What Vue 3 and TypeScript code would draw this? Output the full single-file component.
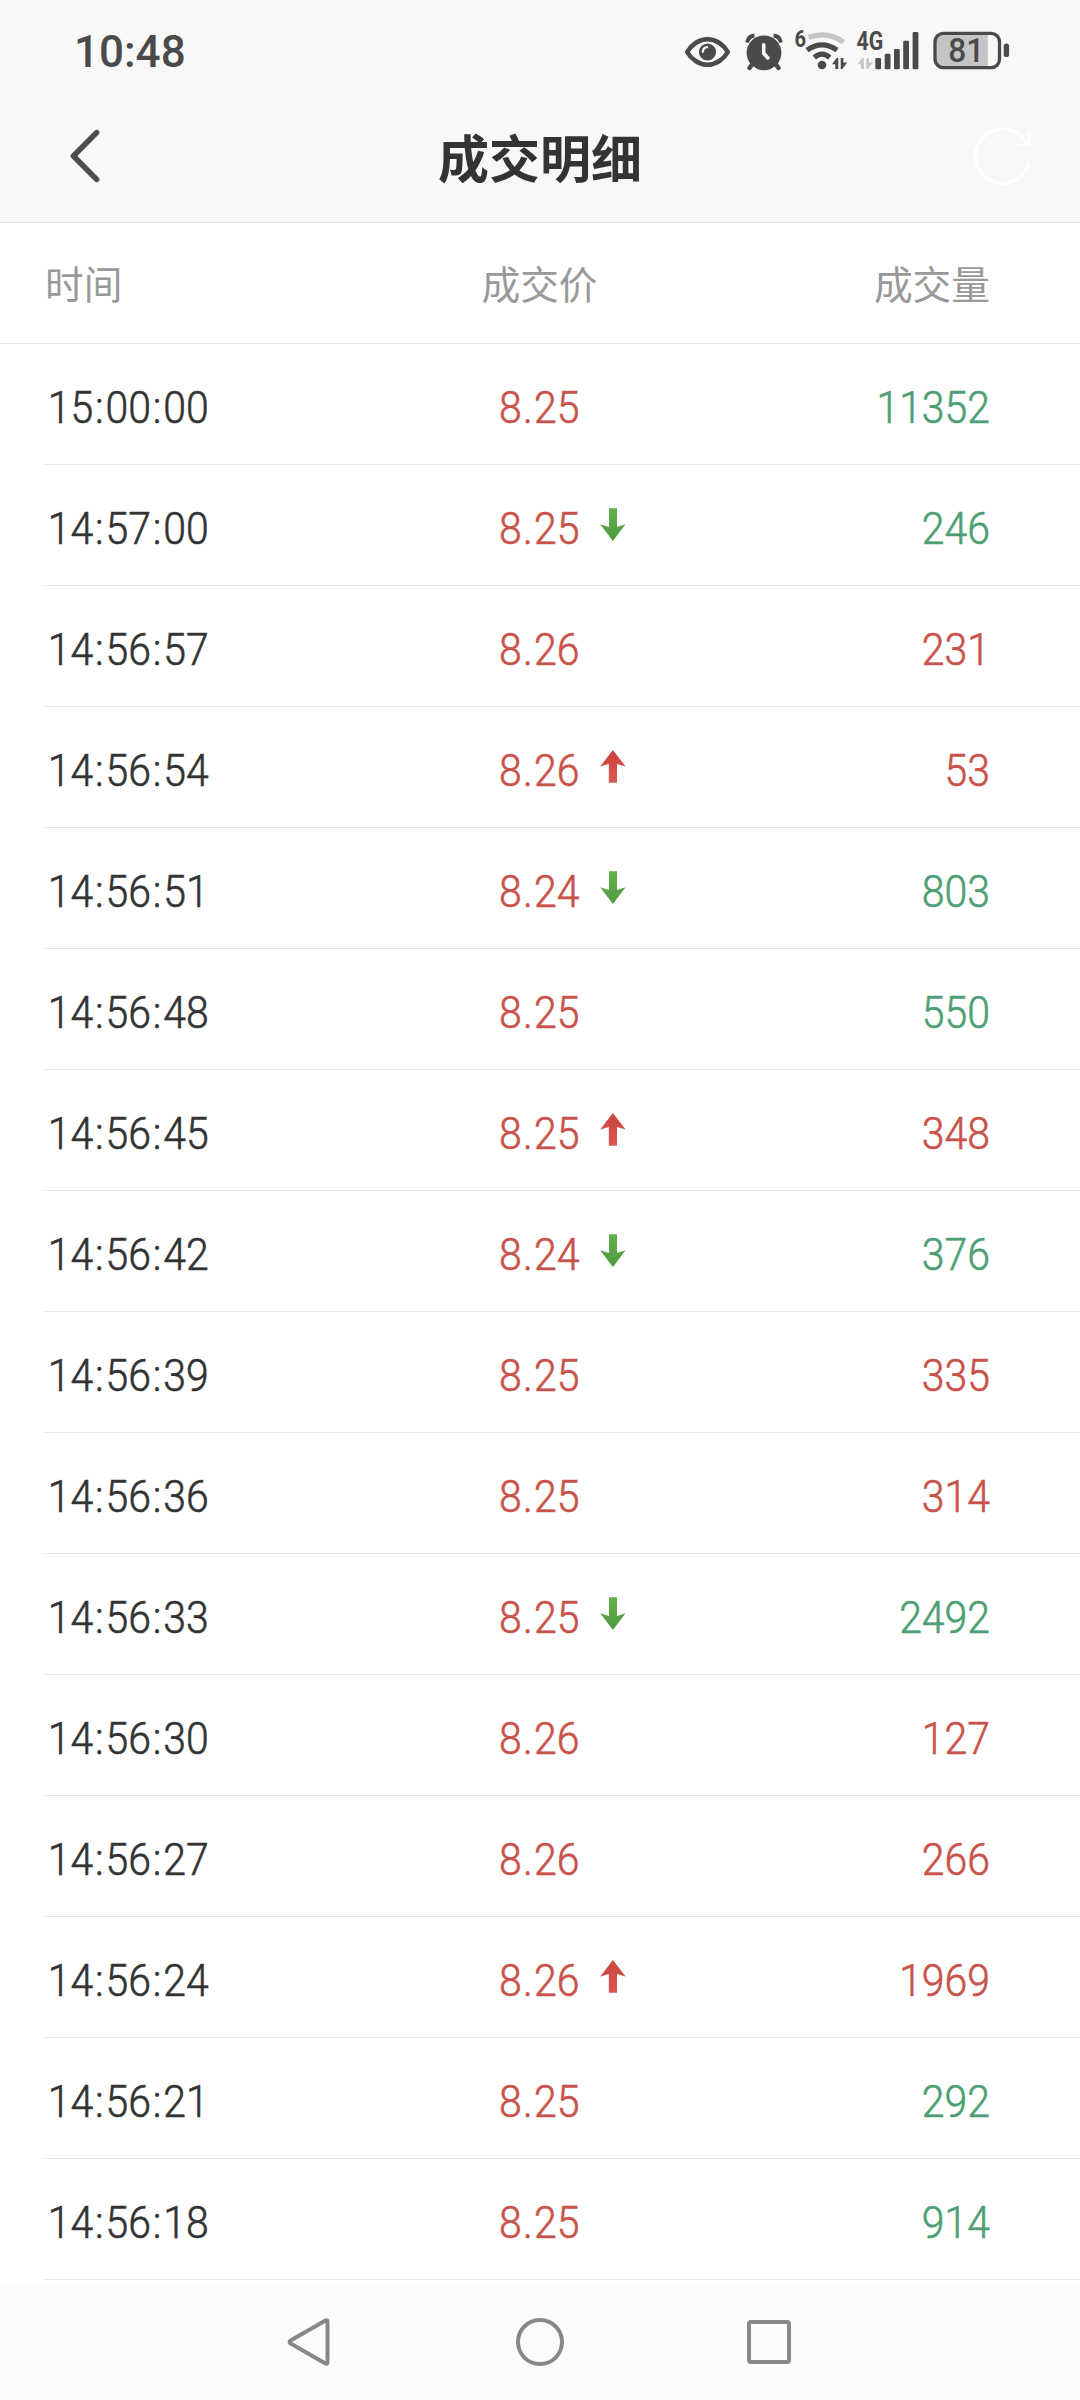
<script setup lang="ts">
type Tone = 'up' | 'down'

interface Trade {
  time: string
  price: string
  arrow?: Tone
  volume: string
  side: Tone
}

const trades: Trade[] = [
  { time: '15:00:00', price: '8.25', volume: '11352', side: 'down' },
  { time: '14:57:00', price: '8.25', arrow: 'down', volume: '246', side: 'down' },
  { time: '14:56:57', price: '8.26', volume: '231', side: 'up' },
  { time: '14:56:54', price: '8.26', arrow: 'up', volume: '53', side: 'up' },
  { time: '14:56:51', price: '8.24', arrow: 'down', volume: '803', side: 'down' },
  { time: '14:56:48', price: '8.25', volume: '550', side: 'down' },
  { time: '14:56:45', price: '8.25', arrow: 'up', volume: '348', side: 'up' },
  { time: '14:56:42', price: '8.24', arrow: 'down', volume: '376', side: 'down' },
  { time: '14:56:39', price: '8.25', volume: '335', side: 'up' },
  { time: '14:56:36', price: '8.25', volume: '314', side: 'up' },
  { time: '14:56:33', price: '8.25', arrow: 'down', volume: '2492', side: 'down' },
  { time: '14:56:30', price: '8.26', volume: '127', side: 'up' },
  { time: '14:56:27', price: '8.26', volume: '266', side: 'up' },
  { time: '14:56:24', price: '8.26', arrow: 'up', volume: '1969', side: 'up' },
  { time: '14:56:21', price: '8.25', volume: '292', side: 'down' },
  { time: '14:56:18', price: '8.25', volume: '914', side: 'down' },
]

// Separators get a wider cell than the font gives them.
const parts = (s: string): string[] => s.split(/([:.])/)
const isSep = (s: string): boolean => s === ':' || s === '.'
</script>

<template>
  <div class="screen">
    <header class="top">
      <div class="status">
        <span class="clock">10:48</span>
        <div class="indicators">
          <svg class="eye" width="46" height="40" viewBox="684 32 46 40">
            <path d="M687.2 52C691 45 699 39.2 707.5 39.2S724 45 727.8 52C724 59 716 64.8 707.5 64.8S691 59 687.2 52Z" fill="none" stroke="#4a4a4a" stroke-width="4.6" stroke-linejoin="round" />
            <circle cx="707.5" cy="52" r="8.6" fill="#4a4a4a" />
            <path d="M702.8 51.8A5 5 0 0 1 707 47.2" fill="none" stroke="#f8f8f8" stroke-width="2.2" stroke-linecap="round" />
          </svg>
          <svg class="alarm" width="38" height="40" viewBox="744.5 32 38 40">
            <circle cx="763.5" cy="52.8" r="17.4" fill="#4a4a4a" />
            <path d="M746.6 42.5Q748 36 754 35.6M780.4 42.5Q779 36 773 35.6" fill="none" stroke="#4a4a4a" stroke-width="4" />
            <path d="M751.5 64.5L749 68M775.5 64.5L778 68" stroke="#4a4a4a" stroke-width="4.4" stroke-linecap="round" />
            <path d="M763.2 44.8V53.2L767.4 58" fill="none" stroke="#f8f8f8" stroke-width="3.6" stroke-linecap="round" stroke-linejoin="round" />
          </svg>
          <svg class="wifi" width="54" height="60" viewBox="794 20 54 60">
            <path d="M808.5 37.2Q828 30.5 843.6 42.2" fill="none" stroke="#c5c5c5" stroke-width="5.2" />
            <path d="M807 50.2Q822 39.6 837 50.2M814.3 57.4Q822 50.9 829.7 57.4" fill="none" stroke="#4a4a4a" stroke-width="5.2" />
            <circle cx="822" cy="65" r="4.3" fill="#4a4a4a" />
            <path d="M832 64.2L836.6 58H838.3V69H835.3V64.2ZM840.7 58H843.4V62.6H847.2L842.4 69H840.7Z" fill="#4a4a4a" />
            <text x="794.6" y="46.6" font-size="23" font-weight="700" textLength="11.6" lengthAdjust="spacingAndGlyphs" fill="#4a4a4a">6</text>
          </svg>
          <svg class="signal" width="64" height="60" viewBox="856 20 64 60">
            <text x="856.6" y="49.8" font-size="25" font-weight="700" textLength="26.8" lengthAdjust="spacingAndGlyphs" fill="#4a4a4a">4G</text>
            <path d="M857.6 64.2L862.2 58H863.9V69H860.9V64.2ZM866.3 58H869V62.6H872.8L868 69H866.3Z" fill="#c5c5c5" />
            <g fill="#4a4a4a">
              <rect x="875.3" y="58" width="5.8" height="11.3" rx="1.4" />
              <rect x="884.7" y="53.7" width="5.8" height="15.6" rx="1.4" />
              <rect x="894" y="49" width="5.8" height="20.3" rx="1.4" />
              <rect x="903.2" y="40.8" width="5.8" height="28.5" rx="1.4" />
              <rect x="912.6" y="32" width="5.8" height="37.3" rx="1.4" />
            </g>
          </svg>
          <svg class="battery" width="78" height="42" viewBox="932 30 78 42">
            <path d="M943 33.3H987.8V67.7H943A8 8 0 0 1 935 59.7V41.3A8 8 0 0 1 943 33.3Z" fill="#c5c5c5" />
            <rect x="935" y="33.3" width="64.5" height="34.4" rx="8.5" fill="none" stroke="#4a4a4a" stroke-width="3.3" />
            <rect x="1003.7" y="43.6" width="5.4" height="13.5" rx="2.6" fill="#4a4a4a" />
            <text x="948.3" y="62.2" font-size="34" font-weight="500" textLength="36" lengthAdjust="spacingAndGlyphs" fill="#4a4a4a">81</text>
          </svg>
        </div>
      </div>
      <div class="bar">
        <svg class="back" width="34" height="56" viewBox="68 128 34 56">
          <path d="M96.6 132.6L73.4 156L96.6 179.4" fill="none" stroke="#4c4c4c" stroke-width="5.6" stroke-linecap="round" stroke-linejoin="round" />
        </svg>
        <h1>成交明细</h1>
        <svg class="refresh" width="60" height="60" viewBox="972 126 60 60">
          <path d="M1028.9 162.2A27 27 0 1 1 1027.2 145" fill="none" stroke="#fff" stroke-width="3.4" />
          <path d="M1017 145.5H1029.2V132" fill="none" stroke="#fff" stroke-width="3" />
        </svg>
      </div>
    </header>

    <div class="row head">
      <span>时间</span>
      <span class="mid">成交价</span>
      <span class="end">成交量</span>
    </div>

    <main>
      <div v-for="t in trades" :key="t.time" class="row trade">
        <span class="num time"><span v-for="(p, i) in parts(t.time)" :key="i" :class="{ sep: isSep(p) }">{{ p }}</span></span>
        <span class="mid price">
          <span class="num up"><span v-for="(p, i) in parts(t.price)" :key="i" :class="{ sep: isSep(p) }">{{ p }}</span></span>
          <svg v-if="t.arrow" class="arrow" :class="t.arrow" width="26" height="33" viewBox="0 0 26 33">
            <defs>
              <linearGradient id="gUp" x1="0" y1="0" x2="0" y2="1">
                <stop offset="0" stop-color="#c9443f" />
                <stop offset="1" stop-color="#dc5751" />
              </linearGradient>
              <linearGradient id="gDown" x1="0" y1="0" x2="0" y2="1">
                <stop offset="0" stop-color="#64b04c" />
                <stop offset="1" stop-color="#4f9a3f" />
              </linearGradient>
            </defs>
            <path v-if="t.arrow === 'up'" d="M12.9 0L25.6 16.4L17 14V32.7H8.8V14L0.2 16.4Z" fill="url(#gUp)" />
            <path v-else d="M12.9 33L25.6 16.2L17 19V0.3H9V19L0.2 16.2Z" fill="url(#gDown)" />
          </svg>
        </span>
        <span class="end num" :class="t.side">{{ t.volume }}</span>
      </div>
    </main>

    <nav>
      <svg width="44" height="50" viewBox="287 2317 44 50">
        <path d="M325.5 2320.6Q327.5 2319.6 327.5 2322V2362Q327.5 2364.4 325.5 2363.4L290.6 2343.6Q288.6 2342 290.6 2340.4Z" fill="none" stroke="#888" stroke-width="4" stroke-linejoin="round" />
      </svg>
      <svg width="50" height="50" viewBox="-1 0 50 50">
        <circle cx="25" cy="25" r="22" fill="none" stroke="#888" stroke-width="4" />
      </svg>
      <svg width="46" height="46" viewBox="0 0 46 46">
        <rect x="3" y="3" width="40" height="40" rx="2" fill="none" stroke="#888" stroke-width="4" />
      </svg>
    </nav>
  </div>
</template>

<style>
body {
  background: #fff;
}
</style>

<style scoped>
.screen {
  width: 1080px;
  height: 2400px;
  display: flex;
  flex-direction: column;
  overflow: hidden;
  background: #fff;
  color: #333;
  font-family: Roboto, 'Noto Sans CJK SC', sans-serif;
}
svg {
  display: block;
  flex: none;
  overflow: visible;
}
.top {
  box-sizing: border-box;
  height: 223px;
  background: #f8f8f8;
  border-bottom: 1px solid #e3e3e3;
}
.status {
  height: 104px;
  padding: 0 70px 0 74px;
  display: flex;
  align-items: center;
  justify-content: space-between;
}
.clock {
  font-size: 44px;
  line-height: 52px;
  font-weight: 500;
  color: #4a4a4a;
}
.indicators {
  display: flex;
  align-items: center;
}
.alarm {
  margin-left: 14.5px;
}
.wifi {
  margin: -4px 0 0 11.5px;
}
.signal {
  margin: -4px 0 0 8px;
}
.battery {
  margin: -2px 0 0 12px;
}
.bar {
  height: 104px;
  padding: 0 48px 0 68px;
  display: grid;
  grid-template-columns: 60px 1fr 60px;
  align-items: center;
}
h1 {
  margin: 0 0 0 -20px;
  font: 700 51px/74px 'Noto Sans CJK SC', sans-serif;
  text-align: center;
}
.row {
  box-sizing: border-box;
  height: 121px;
  display: grid;
  grid-template-columns: 375px 240px 1fr;
  align-items: center;
}
.head {
  padding: 0 90px 3px 45px;
  border-bottom: 1px solid #e3e3e3;
  font: 400 38.7px/56px 'Noto Sans CJK SC', sans-serif;
  color: #999;
}
.head .mid {
  padding-right: 1px;
}
.trade {
  margin-left: 45px;
  padding-right: 90px;
  border-bottom: 1px solid #e5e5e5;
}
.mid {
  text-align: center;
}
.end {
  text-align: right;
}
.num {
  display: inline-block;
  padding-top: 7px;
  font-size: 45px;
  line-height: 54px;
  font-weight: 300;
  -webkit-text-stroke: 0.6px currentColor;
  transform: scaleX(0.91);
  transform-origin: center;
  white-space: nowrap;
}
.time {
  transform-origin: left;
  padding-left: 3px;
}
.end.num {
  transform-origin: right;
}
.sep {
  display: inline-block;
  width: 13.6px;
  text-align: center;
}
.price {
  position: relative;
  left: -1px;
}
.arrow {
  position: absolute;
  left: 181px;
  top: 50%;
  margin-top: -17px;
}
.num.up {
  color: #c9524a;
}
.num.down {
  color: #4e9f74;
}
nav {
  margin-top: 4px;
  height: 116px;
  box-sizing: border-box;
  padding: 0 288px 0 287px;
  display: flex;
  align-items: center;
  justify-content: space-between;
  background: #fcfcfc;
}
</style>
